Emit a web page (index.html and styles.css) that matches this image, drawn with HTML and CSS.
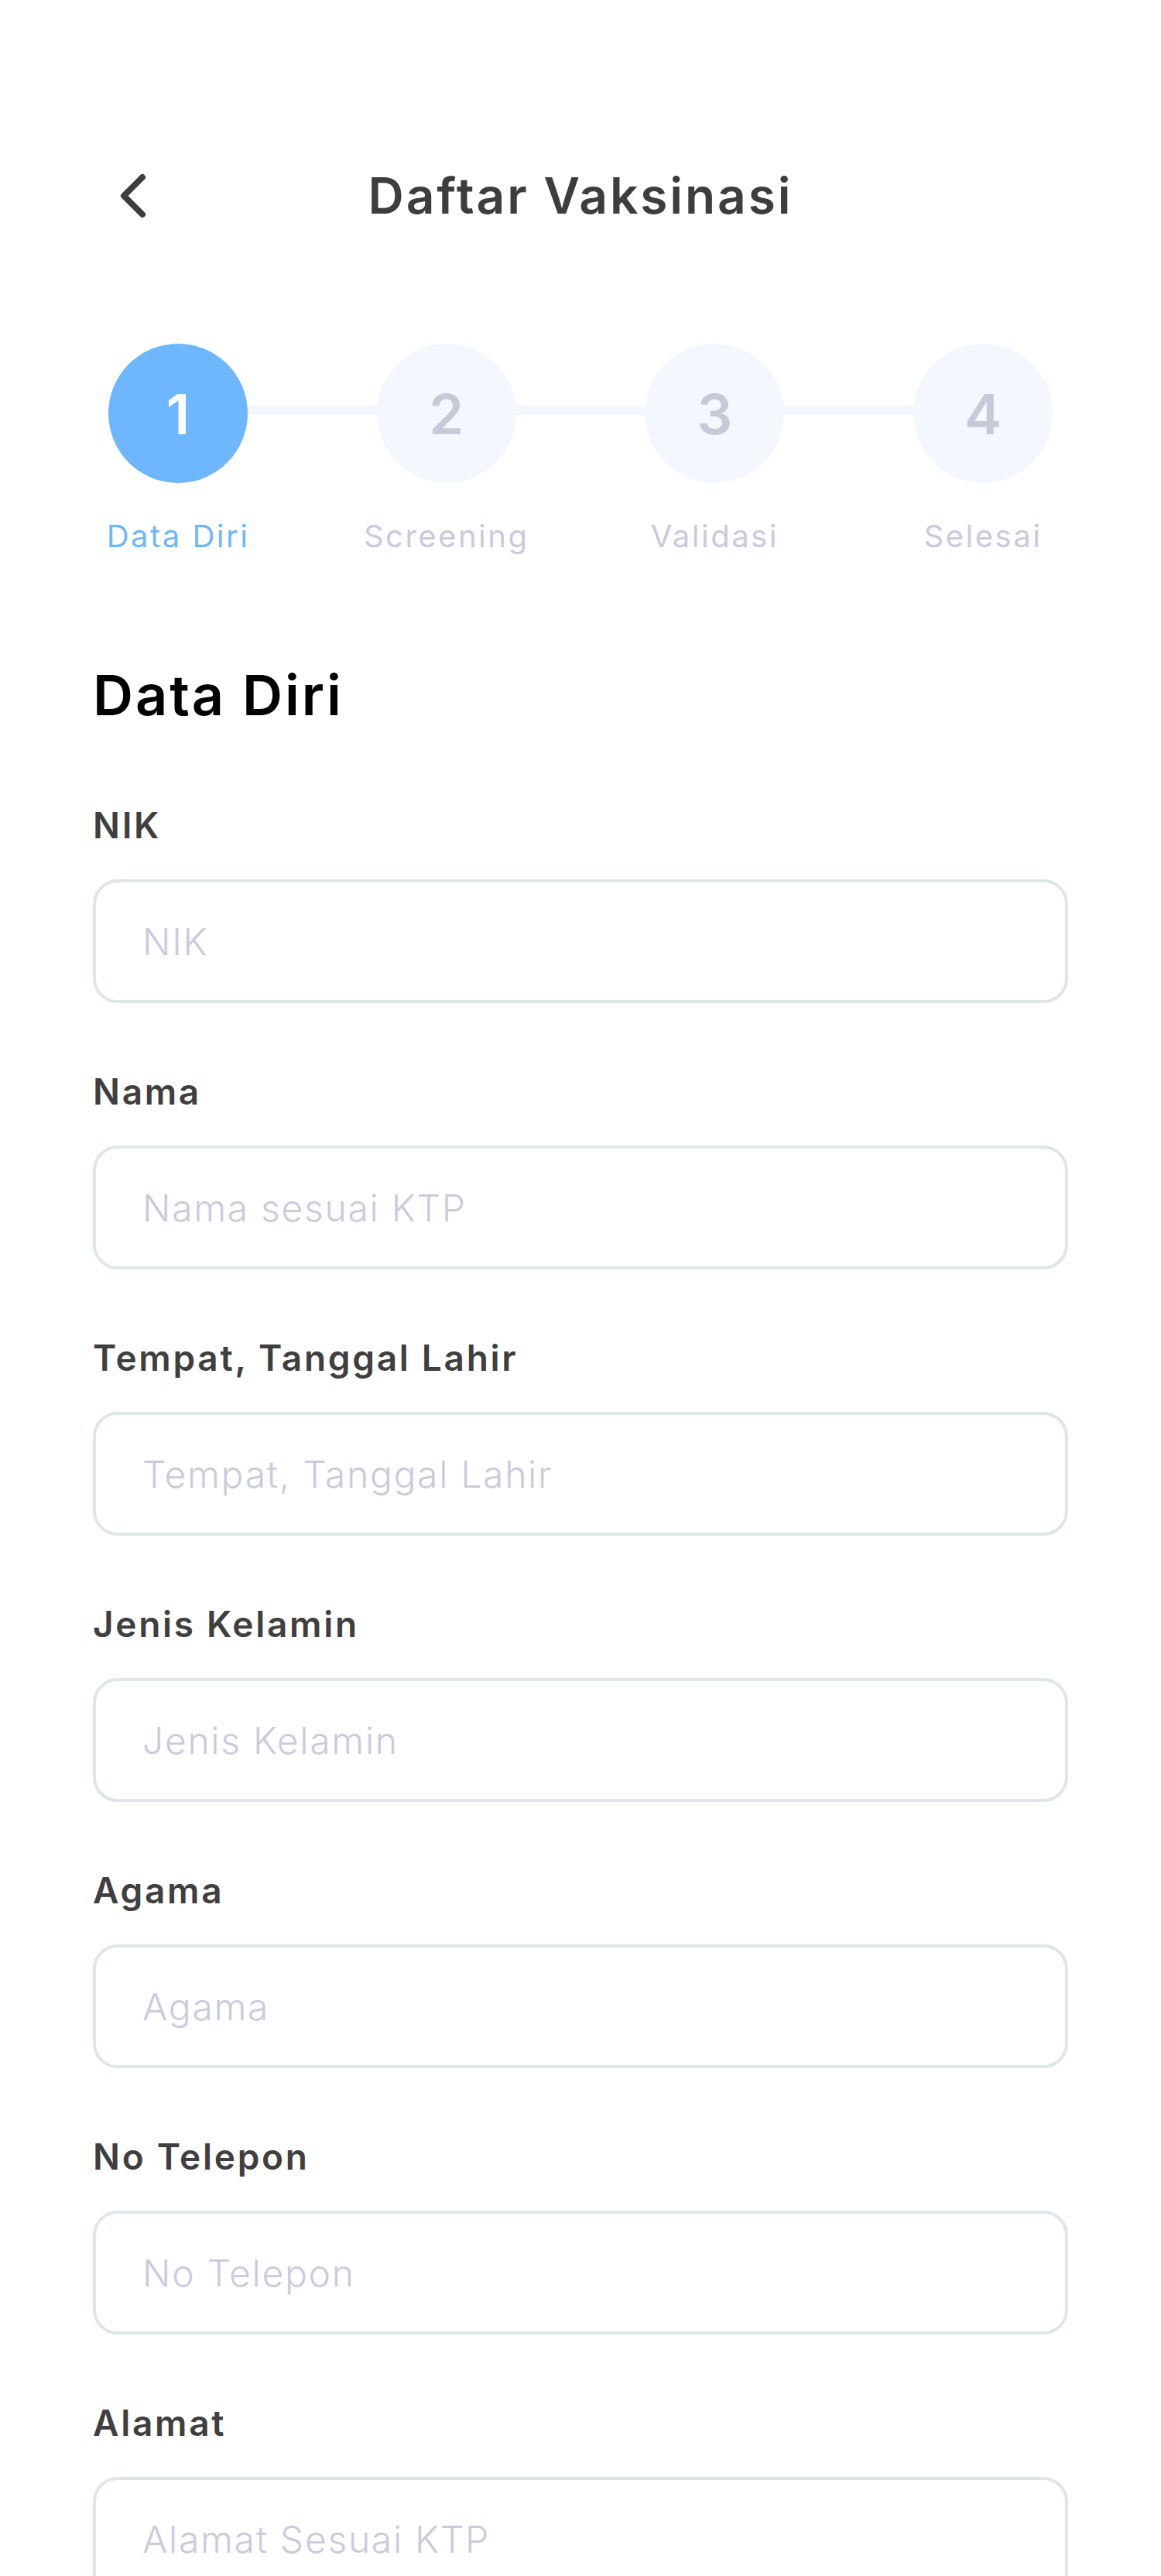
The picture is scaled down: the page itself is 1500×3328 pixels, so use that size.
FILE: index.html
```html
<!DOCTYPE html>
<html lang="id">
<head>
<meta charset="utf-8">
<title>Daftar Vaksinasi</title>
<link rel="stylesheet" href="styles.css">
</head>
<body>
<div class="page">
  <header class="header">
    <button class="back" aria-label="Kembali">
      <svg width="44" height="66" viewBox="0 0 44 66"><path d="M34 9 L10 33 L34 57" fill="none" stroke="#3d3d3d" stroke-width="8" stroke-linecap="round" stroke-linejoin="round"/></svg>
    </button>
    <h1 class="title">Daftar Vaksinasi</h1>
    <span></span>
  </header>

  <div class="stepper">
    <div class="stepper-line"></div>
    <div class="step active"><div class="circle">1</div><div class="step-label">Data Diri</div></div>
    <div class="step"><div class="circle">2</div><div class="step-label">Screening</div></div>
    <div class="step"><div class="circle">3</div><div class="step-label">Validasi</div></div>
    <div class="step"><div class="circle">4</div><div class="step-label">Selesai</div></div>
  </div>

  <h2 class="section-title">Data Diri</h2>

  <form class="form">
    <div class="field"><label class="label">NIK</label><input class="input" type="text" placeholder="NIK"></div>
    <div class="field"><label class="label">Nama</label><input class="input" type="text" placeholder="Nama sesuai KTP"></div>
    <div class="field"><label class="label">Tempat, Tanggal Lahir</label><input class="input" type="text" placeholder="Tempat, Tanggal Lahir"></div>
    <div class="field"><label class="label">Jenis Kelamin</label><input class="input" type="text" placeholder="Jenis Kelamin"></div>
    <div class="field"><label class="label">Agama</label><input class="input" type="text" placeholder="Agama"></div>
    <div class="field"><label class="label">No Telepon</label><input class="input" type="text" placeholder="No Telepon"></div>
    <div class="field"><label class="label">Alamat</label><input class="input" type="text" placeholder="Alamat Sesuai KTP"></div>
  </form>
</div>
</body>
</html>
```
FILE: styles.css
```css
* { box-sizing: border-box; }
html, body { margin: 0; padding: 0; background: #ffffff; }
body { font-family: Inter, "Open Sans", sans-serif; color: #3d3d3d; }

.page { padding: 205px 120px 0; }

.header {
  display: grid;
  grid-template-columns: 1fr auto 1fr;
  align-items: center;
  height: 96px;
}
.back {
  justify-self: start;
  margin-left: 30px;
  padding: 0;
  border: 0;
  background: none;
  display: flex;
}
.title {
  margin: 0;
  font-size: 64px;
  line-height: 96px;
  font-weight: 600;
  color: #3d3d3d;
  letter-spacing: 2.9px;
}

.stepper {
  position: relative;
  display: flex;
  justify-content: space-between;
  margin-top: 143px;
  padding: 0 20px;
}
.stepper-line {
  position: absolute;
  top: 80px;
  left: 110px;
  right: 110px;
  height: 12px;
  background: #f4f7fe;
}
.step {
  position: relative;
  width: 180px;
  display: flex;
  flex-direction: column;
  align-items: center;
}
.circle {
  width: 180px;
  height: 180px;
  border-radius: 50%;
  background: #f4f7fe;
  color: #c7c9d9;
  font-size: 72px;
  font-weight: 600;
  display: flex;
  align-items: center;
  justify-content: center;
}
.step-label {
  margin-top: 39px;
  font-size: 40px;
  line-height: 60px;
  font-weight: 400;
  letter-spacing: 2.5px;
  white-space: nowrap;
  color: #c9cbdc;
}
.step.active .circle { background: #6fb7fd; color: #ffffff; }
.step.active .step-label { color: #6fb7fd; }

.section-title {
  margin: 132px 0 0;
  font-size: 72px;
  line-height: 86px;
  font-weight: 600;
  color: #000000;
  letter-spacing: 2.9px;
}

.form {
  display: flex;
  flex-direction: column;
  gap: 80px;
  margin-top: 91px;
}
.field { display: flex; flex-direction: column; }
.label {
  font-size: 46px;
  line-height: 69px;
  font-weight: 600;
  color: #3f3f3f;
  margin-bottom: 35px;
  letter-spacing: 2.7px;
}
.input {
  width: 100%;
  height: 160px;
  border: 4px solid #dfe6e9;
  border-radius: 32px;
  padding: 0 56px 0 60px;
  font-family: Inter, "Open Sans", sans-serif;
  font-size: 48px;
  font-weight: 300;
  letter-spacing: 1.7px;
  color: #3d3d3d;
  background: #ffffff;
  outline: none;
}
.input::placeholder { color: #c9cbdc; opacity: 1; }
```
